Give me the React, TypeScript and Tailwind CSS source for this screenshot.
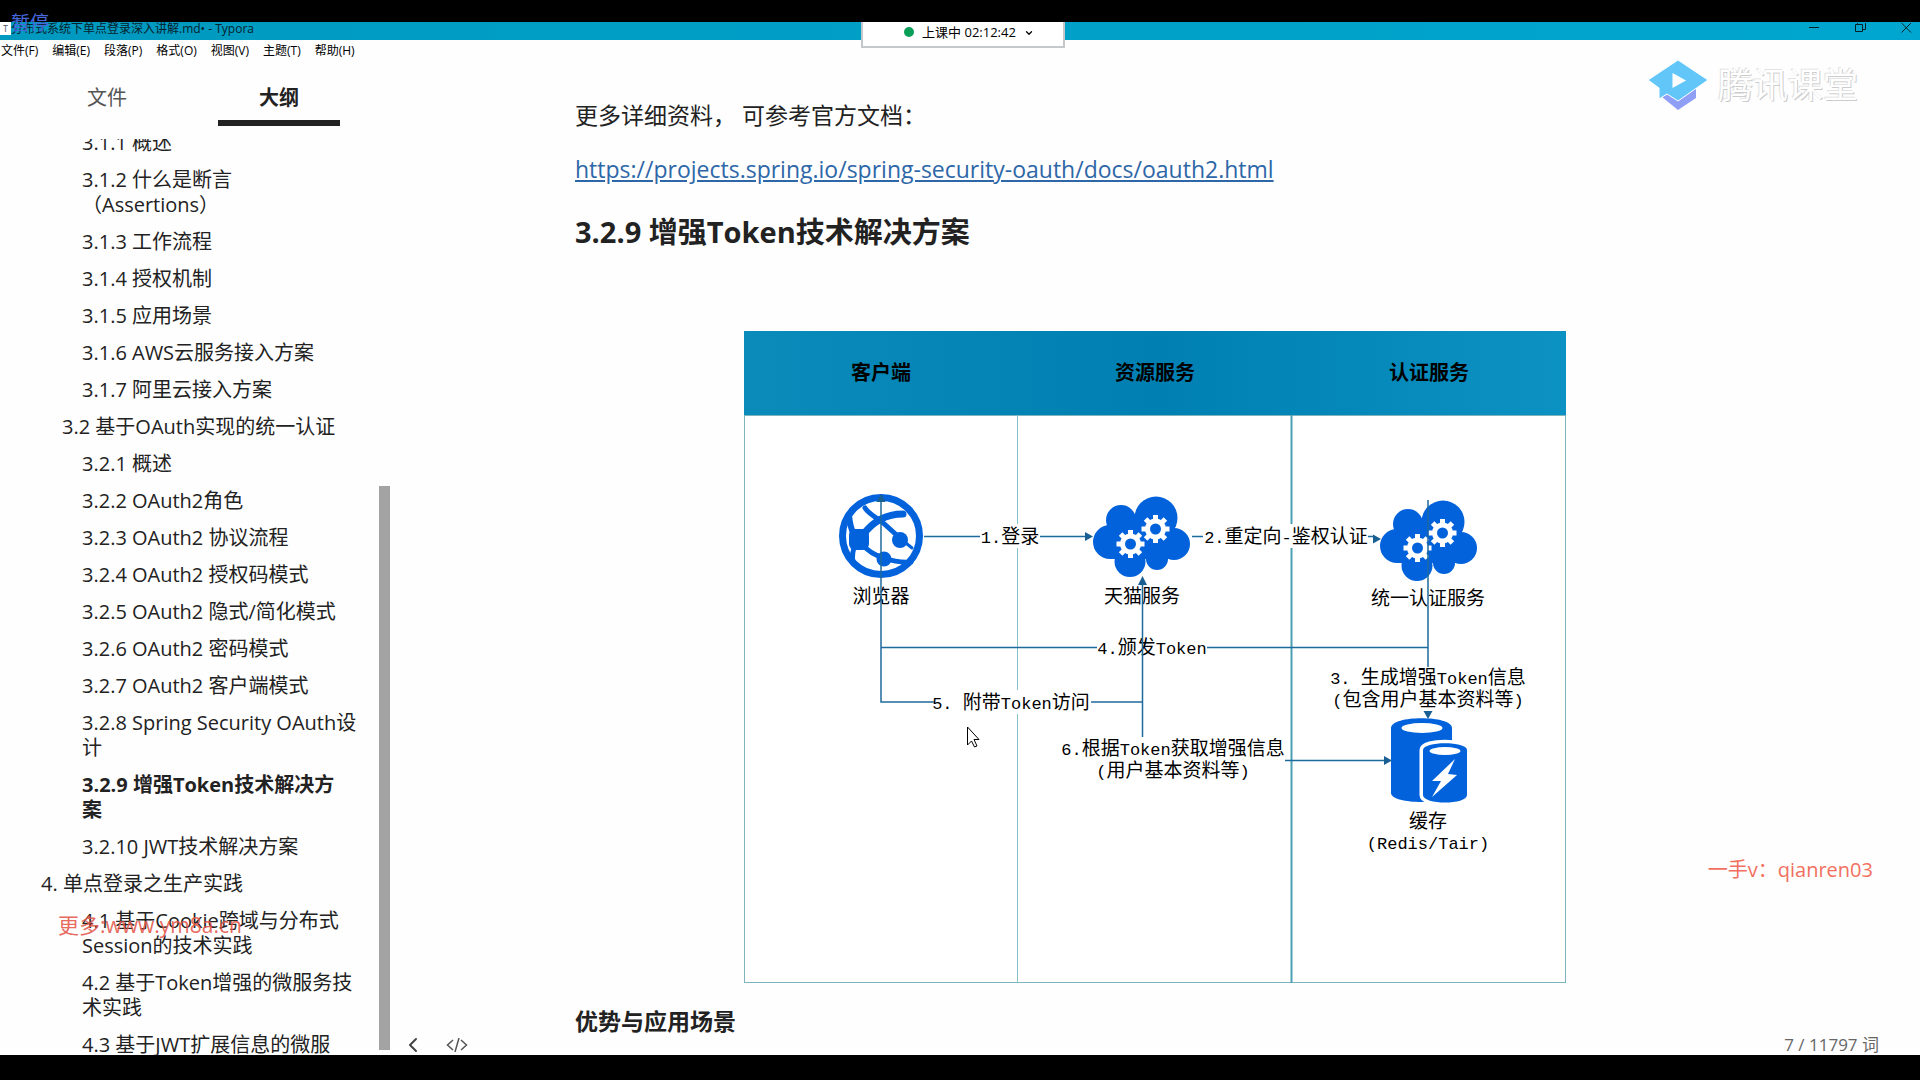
import { ChevronDown, ChevronLeft } from "lucide-react";

const MENU = ["文件(F)", "编辑(E)", "段落(P)", "格式(O)", "视图(V)", "主题(T)", "帮助(H)"];

type OutlineItem = { level: 1 | 2 | 3; lines: string[]; active?: boolean };

const OUTLINE: OutlineItem[] = [
  { level: 3, lines: ["3.1.1 概述"] },
  { level: 3, lines: ["3.1.2 什么是断言", "（Assertions）"] },
  { level: 3, lines: ["3.1.3 工作流程"] },
  { level: 3, lines: ["3.1.4 授权机制"] },
  { level: 3, lines: ["3.1.5 应用场景"] },
  { level: 3, lines: ["3.1.6 AWS云服务接入方案"] },
  { level: 3, lines: ["3.1.7 阿里云接入方案"] },
  { level: 2, lines: ["3.2 基于OAuth实现的统一认证"] },
  { level: 3, lines: ["3.2.1 概述"] },
  { level: 3, lines: ["3.2.2 OAuth2角色"] },
  { level: 3, lines: ["3.2.3 OAuth2 协议流程"] },
  { level: 3, lines: ["3.2.4 OAuth2 授权码模式"] },
  { level: 3, lines: ["3.2.5 OAuth2 隐式/简化模式"] },
  { level: 3, lines: ["3.2.6 OAuth2 密码模式"] },
  { level: 3, lines: ["3.2.7 OAuth2 客户端模式"] },
  { level: 3, lines: ["3.2.8 Spring Security OAuth设", "计"] },
  { level: 3, lines: ["3.2.9 增强Token技术解决方", "案"], active: true },
  { level: 3, lines: ["3.2.10 JWT技术解决方案"] },
  { level: 1, lines: ["4. 单点登录之生产实践"] },
  { level: 3, lines: ["4.1 基于Cookie跨域与分布式", "Session的技术实践"] },
  { level: 3, lines: ["4.2 基于Token增强的微服务技", "术实践"] },
  { level: 3, lines: ["4.3 基于JWT扩展信息的微服"] },
];

const INDENT = { 1: "pl-[41px]", 2: "pl-[62px]", 3: "pl-[82px]" };

function TitleBar() {
  return (
    <header className="relative flex h-[18px] shrink-0 items-start bg-linear-to-r from-[#0099bf] to-[#00a6cf]">
      <span className="flex h-[13px] w-[11px] items-center justify-center bg-white text-[9px] leading-none text-gray-600">T</span>
      <h1 className="text-xs leading-[14px] whitespace-pre text-[#06222c]">分布式系统下单点登录深入讲解.md• - Typora</h1>
      <div className="ml-auto flex h-full gap-[35px] pr-[8px]">
        <button aria-label="最小化">
          <svg width="11" height="16" viewBox="0 0 11 16" stroke="#062028" fill="none"><path d="M0 4.5h10" /></svg>
        </button>
        <button aria-label="还原">
          <svg width="11" height="16" viewBox="0 0 11 16" stroke="#062028" fill="none"><path d="M.5 1.5h7v7h-7zM2.5 1.5v-2h8v7h-2.5" /></svg>
        </button>
        <button aria-label="关闭">
          <svg width="11" height="16" viewBox="0 0 11 16" stroke="#062028" fill="none"><path d="M.5 0l9.5 9.5M10 0l-9.5 9.5" /></svg>
        </button>
      </div>
      <div className="absolute inset-x-0 top-0 z-10 flex justify-center pl-1.5">
        <button className="flex h-[26px] w-[204px] items-start justify-center gap-2 border-x-2 border-b-2 border-[#c4c8ca] bg-white pl-3 text-[13px] leading-5 text-black">
          <span className="mt-[5px] size-[10px] rounded-full bg-[#0a9f58]" />
          上课中 02:12:42
          <ChevronDown size={10} strokeWidth={3} className="mt-[6px]" />
        </button>
      </div>
    </header>
  );
}

function Outline() {
  return (
    <aside className="flex w-[390px] shrink-0 flex-col">
      <div className="flex h-[64px] shrink-0 gap-[50px] pl-[46px] text-xl text-[#222]">
        <button className="h-full w-[122px] pt-[8px] text-[#555]">文件</button>
        <button className="h-full w-[122px] border-b-[6px] border-[#222] pt-[14px] font-bold">大纲</button>
      </div>
      <div className="mt-[13px] flex min-h-0 grow overflow-hidden">
        <ul className="-mt-[15px] grow text-xl leading-[25px] whitespace-nowrap text-[#222]">
          {OUTLINE.map((item) => (
            <li key={item.lines[0]} className={INDENT[item.level]}>
              <a href="#section" className={item.active ? "block py-[6px] font-bold" : "block py-[6px]"}>
                {item.lines.map((line) => (
                  <span key={line} className="block">{line}</span>
                ))}
              </a>
            </li>
          ))}
        </ul>
        <div className="mt-auto mb-[5px] h-[564px] w-[11px] shrink-0 bg-[#a3a3a3]" />
      </div>
    </aside>
  );
}

function Gear({ x, y }: { x: number; y: number }) {
  return (
    <g transform={`translate(${x} ${y})`}>
      {[0, 45, 90, 135].map((angle) => (
        <rect key={angle} x="-2.5" y="-14" width="5" height="28" fill="#fff" transform={`rotate(${angle})`} />
      ))}
      <circle r="10.5" fill="#fff" />
      <circle r="5.5" fill="#0262dc" />
    </g>
  );
}

function Cloud({ x, y }: { x: number; y: number }) {
  return (
    <g transform={`translate(${x} ${y})`} fill="#0262dc">
      <circle cx="28" cy="24" r="15" />
      <circle cx="63" cy="22" r="21.5" />
      <circle cx="17" cy="46" r="17" />
      <circle cx="81" cy="48" r="16" />
      <circle cx="37" cy="65.5" r="15.5" />
      <circle cx="64" cy="63" r="11" />
      <path d="M14 30L30 20H82V63H17z" />
      <Gear x={37.5} y={48} />
      <Gear x={62.5} y={33} />
    </g>
  );
}

function Browser() {
  return (
    <g stroke="#0262dc" fill="none" strokeLinecap="round">
      <circle cx="137" cy="121" r="38.5" strokeWidth="7" />
      <path d="M121 93Q124 98 137 106L157 124" strokeWidth="5" />
      <path d="M157 124L168 133" strokeWidth="3" />
      <path d="M119 120Q134 99 159 99" strokeWidth="7" />
      <path d="M105 100Q106 112 110 120" strokeWidth="6" />
      <path d="M112 128Q107 138 109 148" strokeWidth="5" />
      <path d="M118 129Q126 139 140 143Q154 148 167 147" strokeWidth="5" />
      <rect x="105" y="114" width="20" height="21" rx="6" fill="#0262dc" stroke="none" />
      <circle cx="156" cy="125" r="8" fill="#0262dc" stroke="none" />
      <circle cx="140" cy="144" r="7.5" fill="#0262dc" stroke="none" />
    </g>
  );
}

function Cache() {
  return (
    <g fill="#0262dc" transform="translate(5 0)">
      <path d="M642 313C642 300 703 300 703 313V378C703 390 642 390 642 378z" />
      <ellipse cx="673" cy="313" rx="20.5" ry="5" fill="#fff" />
      <path d="M674 335C674 326 718 326 718 335V380C718 390 674 390 674 380z" stroke="#fff" strokeWidth="7" />
      <path d="M674 335C674 326 718 326 718 335V380C718 390 674 390 674 380z" />
      <ellipse cx="696" cy="336" rx="15.5" ry="4" fill="#fff" />
      <path d="M706 344L683 366H692L683 382L708 360L699 359z" fill="#fff" />
    </g>
  );
}

type LabelProps = { x: number; y: number; text: string; plate?: number };

// y is the middle of the line, plate the width of the white backing
function Label({ x, y, text, plate = 0 }: LabelProps) {
  const runs = text.split(/([\x20-\x7e]+)/).filter(Boolean);
  return (
    <>
      {plate > 0 && <rect x={x - plate / 2} y={y - 12} width={plate} height="24" fill="#fff" />}
      <text x={x} y={y + 7} textAnchor="middle" className="fill-black text-[19px] whitespace-pre">
        {runs.map((run, i) => (
          <tspan key={i} className={/^[\x20-\x7e]/.test(run) ? "font-['Liberation_Mono',monospace] text-[17px]" : undefined}>
            {run}
          </tspan>
        ))}
      </text>
    </>
  );
}

function FlowDiagram() {
  return (
    <figure className="mx-auto w-full max-w-[822px]">
      <div className="grid h-[84px] grid-cols-3 items-center bg-linear-to-r from-[#0a8bba] via-[#0080b2] to-[#0c92c2] text-center text-xl font-bold text-black">
        <span>客户端</span>
        <span>资源服务</span>
        <span>认证服务</span>
      </div>
      <svg viewBox="0 0 822 568" className="block w-full" role="img" aria-label="增强Token流程图">
        <rect x="0.5" y="0.5" width="821" height="567" fill="#fff" stroke="#7fb4bf" />
        <path d="M273.5 0V568" stroke="#85c2cb" />
        <path d="M547.5 0V568" stroke="#4d9fb4" strokeWidth="2" />

        <Browser />
        <Cloud x={349} y={81} />
        <Cloud x={636} y={85} />
        <Cache />

        <Label x={137} y={181} text="浏览器" />
        <Label x={398} y={181} text="天猫服务" />
        <Label x={684} y={183} text="统一认证服务" />
        <Label x={266} y={121} text="1.登录" plate={58} />
        <Label x={542} y={121} text="2.重定向-鉴权认证" plate={164} />
        <Label x={684} y={262} text="3. 生成增强Token信息" />
        <Label x={684} y={284} text="(包含用户基本资料等)" />
        <Label x={408} y={232} text="4.颁发Token" />
        <Label x={267} y={287} text="5. 附带Token访问" plate={158} />
        <Label x={429} y={333} text="6.根据Token获取增强信息" />
        <Label x={429} y={355} text="(用户基本资料等)" />
        <Label x={684} y={406} text="缓存" />
        <Label x={684} y={427} text="(Redis/Tair)" />

        <g stroke="#1f6a9c" strokeWidth="1.5" fill="none">
          <path d="M180 121.5H236M296 121.5H342M448 121.5H459M624 121.5H630" />
          <path d="M137 81V287H190M347 287H398.5" />
          <path d="M137 232.5H353M463 232.5H684" />
          <path d="M398.5 168V322M684 85V252M541 345.5H640" />
        </g>
        <g fill="#1a5f92">
          <path d="M349 121.5L341 117V126z" />
          <path d="M637 124L629 119.5V128.5z" />
          <path d="M137 79L132.5 87H141.5z" />
          <path d="M398.5 161L394 170H403z" />
          <path d="M684 304L679.5 296H688.5z" />
          <path d="M648 345.5L640 341V350z" />
        </g>

        {/* pointer */}
        <path d="M223.5 312V330L227.5 326L230.5 332L233 331L230 324.5H235z" fill="#fff" stroke="#000" />
      </svg>
    </figure>
  );
}

function Document() {
  return (
    <main className="flex min-w-0 grow flex-col">
      <article className="mx-auto flex min-h-0 w-full max-w-[1160px] grow flex-col overflow-hidden pt-[35px] text-[23px] leading-[36px] text-[#222]">
        <p>更多详细资料， 可参考官方文档：</p>
        <p className="mt-[18px]">
          <a href="https://projects.spring.io/spring-security-oauth/docs/oauth2.html" className="text-[#2e67a8] underline">
            https://projects.spring.io/spring-security-oauth/docs/oauth2.html
          </a>
        </p>
        <h3 className="mt-[25px] mb-[79px] text-[29px] leading-[40px] font-bold">3.2.9 增强Token技术解决方案</h3>
        <FlowDiagram />
        <h4 className="mt-[20px] font-bold">优势与应用场景</h4>
      </article>
      <footer className="flex h-[20px] shrink-0 items-center pr-[41px] pl-[11px] text-[#444]">
        <button aria-label="收起侧边栏">
          <ChevronLeft size={24} />
        </button>
        <button aria-label="源代码模式" className="ml-[21px]">
          <svg width="22" height="14" viewBox="0 0 22 14" fill="none" stroke="#555" strokeWidth="1.5">
            <path d="M7 2L1.5 7L7 12M15 2L20.5 7L15 12M13 0L9 14" />
          </svg>
        </button>
        <span className="ml-auto text-[17px] leading-5 text-[#666]">7 / 11797 词</span>
      </footer>
    </main>
  );
}

function ClassroomLogo() {
  return (
    <div className="absolute top-[59px] right-[62px] flex items-center gap-[10px]">
      <svg width="60" height="52" viewBox="0 0 60 52">
        <path d="M14 38L30 30L48 30V39L30 51z" fill="#8f9ff6" />
        <path d="M30 1L60 21L30 42L19 35L11 40V29L0 21z" fill="#62c6f8" stroke="#fff" />
        <path d="M24.5 14V29L38 21.5z" fill="#fff" />
      </svg>
      <span className="text-[35px] leading-[52px] text-white [text-shadow:1px_1px_0px_#ccc,-1px_-1px_0px_#e2e2e2]">腾讯课堂</span>
    </div>
  );
}

export default function App() {
  return (
    <div className="relative flex h-screen flex-col overflow-hidden bg-[#fefefe] font-['Open_Sans','Noto_Sans_CJK_SC',sans-serif]">
      <div className="h-[22px] shrink-0 bg-black" />
      <TitleBar />
      <nav className="flex h-[22px] shrink-0 items-center gap-[14px] pl-[1px] text-xs text-black">
        {MENU.map((label) => (
          <button key={label}>{label}</button>
        ))}
      </nav>
      <div className="flex min-h-0 grow">
        <Outline />
        <Document />
      </div>
      <div className="h-[25px] shrink-0 bg-black" />

      <ClassroomLogo />
      <span className="absolute top-[12px] left-[11px] z-20 text-[19px] leading-[22px] text-[#4668dc]">暂停</span>
      <span className="absolute top-[910px] left-[58px] text-[21px] leading-[30px] text-[#e4574a]/90">更多:www.ym8a.cn</span>
      <span className="absolute top-[855px] right-[47px] text-xl leading-[30px] text-[#f2705f]">一手v：qianren03</span>
    </div>
  );
}
